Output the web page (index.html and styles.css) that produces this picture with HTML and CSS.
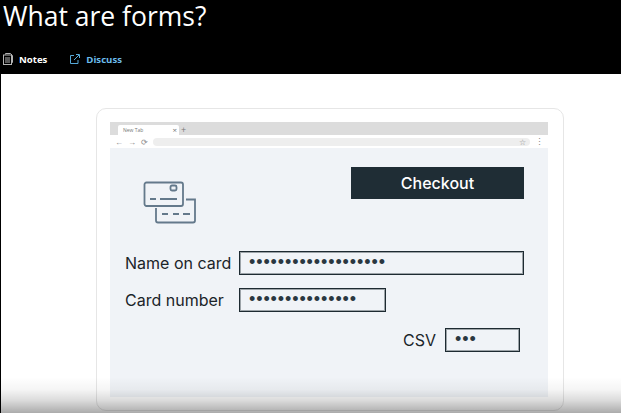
FILE: index.html
```html
<!doctype html>
<html>
<head>
<meta charset="utf-8">
<title>What are forms?</title>
<link rel="stylesheet" href="styles.css">
</head>
<body>
<header class="top">
	<h1>What are forms?</h1>
	<nav class="tabs">
		<a class="tab notes">
			<svg width="10" height="12" viewBox="0 0 10 12" fill="none" stroke="#b5b5b5"><path d="M2.5 1.5V.5H7.5L9.5 2.5V9.5H8.5"/><rect x=".5" y="2" width="8" height="9.5"/><path d="M2 5H7M2 7H7M2 9H7"/></svg>
			Notes
		</a>
		<a class="tab discuss">
			<svg width="10" height="10" viewBox="0 0 10 10" fill="none" stroke="#56a9d8"><path d="M4 1.5H.5V9.5H8V6"/><path d="M4 6L9 1M6 .5H9.5V4"/></svg>
			Discuss
		</a>
	</nav>
</header>

<main class="stage">
	<div class="card">
		<div class="browser">
			<div class="tabstrip">
				<div class="newtab"><span>New Tab</span><span class="x">×</span></div>
				<span class="plus">+</span>
			</div>
			<div class="toolbar">
				<span class="nav">←</span><span class="nav">→</span><span class="nav">⟳</span>
				<div class="address"><span class="star">☆</span></div>
				<span class="menu">⋮</span>
			</div>
			<div class="content">
				<div class="toprow">
					<svg class="cards" width="54" height="44" viewBox="0 0 54 44" fill="none" stroke="#64798b" stroke-width="1.8">
						<rect x="1.5" y="1.5" width="38.5" height="23.5" rx="2"/>
						<rect x="27.5" y="4.5" width="6" height="5" rx="1.5"/>
						<path d="M7 18H13M17 18H34"/>
						<path d="M43 18.5H52V39.5Q52 41.5 50 41.5H15Q13 41.5 13 39.5V27"/>
						<path d="M19 33H25M30 33H36M40 33H47"/>
					</svg>
					<button class="checkout">Checkout</button>
				</div>
				<div class="row first">
					<label>Name on card</label>
					<div class="field wide">•••••••••••••••••••</div>
				</div>
				<div class="row second">
					<label>Card number</label>
					<div class="field mid">•••••••••••••••</div>
				</div>
				<div class="row third">
					<label>CSV</label>
					<div class="field small">•••</div>
				</div>
			</div>
		</div>
	</div>
</main>
<div class="fade"></div>
</body>
</html>
```
FILE: styles.css
```css
*{box-sizing:border-box;}
html,body{margin:0;height:100%;overflow:hidden;}
body{background:#000;font-family:"Open Sans","Liberation Sans",sans-serif;}

.top{height:74px;background:#000;color:#fff;padding-left:3px;}
.top h1{margin:0;height:50px;font-size:26.5px;font-weight:400;line-height:32px;}
.tabs{display:flex;gap:23px;align-items:center;height:14px;margin-top:2px;}
.tab{display:flex;align-items:center;gap:6px;font-size:9.6px;font-weight:700;}
.notes{color:#fff;}
.discuss{color:#6cbcec;}

.stage{height:339px;margin-left:1px;background:#fff;padding:34px 0 0 95px;}
.card{width:468px;height:303px;border:1px solid #e6e6e6;border-radius:10px;padding:13px 14px 0 13px;}
.browser{width:438px;height:275px;display:flex;flex-direction:column;}

.tabstrip{height:13px;background:#dcdcdc;padding:3px 0 0 8px;display:flex;align-items:flex-end;}
.newtab{width:61px;height:10px;background:#fff;border-radius:2px 2px 0 0;display:flex;justify-content:space-between;align-items:center;padding:0 2px 0 5px;font-size:5px;color:#777;}
.newtab .x{font-size:8px;line-height:8px;}
.plus{font-size:9px;line-height:10px;color:#777;margin-left:2px;}

.toolbar{height:13px;background:#fff;display:flex;align-items:center;padding:0 4px 0 5px;color:#888;}
.nav{width:13px;font-size:8px;line-height:10px;}
.address{width:380px;height:8px;margin-left:-1px;border-radius:4px;background:#eee;display:flex;justify-content:flex-end;align-items:center;padding-right:4px;}
.star{font-size:8px;line-height:8px;}
.menu{font-size:9px;line-height:10px;margin-left:5px;}

.content{flex:1;background:#f0f3f7;padding:19px 24px 0 15px;font-family:Inter,"Liberation Sans",sans-serif;color:#1b2429;}
.toprow{display:flex;justify-content:space-between;align-items:flex-start;height:56px;}
.cards{margin:14px 0 0 18px;}
.checkout{width:173px;height:32px;border:0;padding:0;background:#1f2d35;color:#fff;font:500 16px Inter,"Liberation Sans",sans-serif;}

.row{display:flex;align-items:center;height:24px;font-size:16px;}
.row label{width:114px;}
.first{margin-top:28px;}
.second{margin-top:13px;}
.third{margin-top:16px;justify-content:flex-end;padding-right:4px;}
.third label{width:auto;margin-right:9px;}
.field{height:24px;border:1px solid #1d2a31;box-shadow:inset 0 0 0 1px rgba(29,42,49,.4);padding-left:9px;font:400 18px/21px "Liberation Sans",sans-serif;letter-spacing:.9px;color:#2a3740;overflow:hidden;white-space:nowrap;}
.wide{width:285px;}
.mid{width:147px;}
.small{width:75px;}

.fade{position:absolute;left:0;right:0;bottom:0;height:36px;background:linear-gradient(rgba(0,0,0,0),rgba(0,0,0,.04) 35%,rgba(0,0,0,.14) 65%,rgba(0,0,0,.33));}
```
